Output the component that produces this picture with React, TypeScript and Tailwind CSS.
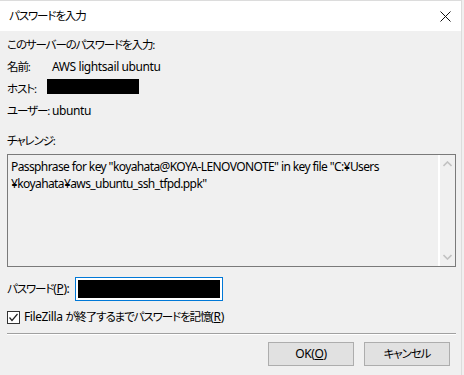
import React from "react";

const F = "[font-family:'Noto_Sans','Noto_Sans_CJK_JP',sans-serif] [font-feature-settings:'palt']";

function J({ children }: { children: React.ReactNode }) {
  return <span className="text-[11.5px] tracking-[-1.1px]">{children}</span>;
}

export default function App() {
  return (
    <div className={`w-[464px] h-[375px] bg-[#f0f0f0] overflow-hidden text-[12px] leading-[16px] tracking-[-0.4px] text-black whitespace-nowrap ${F}`}>
      <div className="w-[462px] h-[375px] border-t border-r border-[#dcdcdc] flex flex-col">
        {/* title bar */}
        <div className="h-[30px] bg-white flex items-center justify-between pl-[9px] pr-[10px] shrink-0">
          <J>パスワードを入力</J>
          <svg width="11" height="11" viewBox="0 0 11 11">
            <path d="M0.5 0.5 L10.5 10.5 M10.5 0.5 L0.5 10.5" stroke="#111" strokeWidth="1" />
          </svg>
        </div>
        <div className="flex flex-col px-[7px] pt-[3px]">
          <div className="h-[22px] flex items-center"><J>このサーバーのパスワードを入力:</J></div>
          <div className="h-[22px] flex items-center">
            <span className="w-[45px] shrink-0"><J>名前:</J></span>
            <span>AWS lightsail ubuntu</span>
          </div>
          <div className="h-[22px] flex items-center">
            <span className="w-[40px] shrink-0"><J>ホスト:</J></span>
            <span className="w-[92px] h-[15px] bg-black -mt-[5px] shrink-0"></span>
          </div>
          <div className="h-[22px] flex items-center">
            <span className="w-[45px] shrink-0"><J>ユーザー:</J></span>
            <span>ubuntu</span>
          </div>
          <div className="h-[22px] flex items-center mt-[8px]"><J>チャレンジ:</J></div>
          <div className="mt-[2px] w-[449px] h-[113px] border border-[#7a7a7a] flex">
            <div className="flex-1 pl-[3px] pt-[3px] leading-[17px] tracking-[-0.6px]">
              Passphrase for key "koyahata@KOYA-LENOVONOTE" in key file "C:¥Users
              <br />
              ¥koyahata¥aws_ubuntu_ssh_tfpd.ppk"
            </div>
            <div className="w-[17px] border-l-2 border-white flex flex-col justify-between items-center py-[6px]">
              <svg width="9" height="6" viewBox="0 0 9 6">
                <path d="M0.5 5 L4.5 1 L8.5 5" stroke="#c2c2c2" strokeWidth="1.6" fill="none" />
              </svg>
              <svg width="9" height="6" viewBox="0 0 9 6">
                <path d="M0.5 1 L4.5 5 L8.5 1" stroke="#c2c2c2" strokeWidth="1.6" fill="none" />
              </svg>
            </div>
          </div>
          <div className="mt-[10px] h-[24px] flex items-center">
            <span className="w-[68px] shrink-0">
              <J>パスワード</J>(<span className="underline">P</span>):
            </span>
            <div className="w-[148px] h-[24px] border border-[#0078d7] bg-white p-[2px] shrink-0">
              <div className="w-full h-full bg-black"></div>
            </div>
          </div>
          <div className="mt-[7px] h-[18px] flex items-center">
            <div className="w-[13px] h-[13px] border border-[#333] bg-white flex items-center justify-center shrink-0">
              <svg width="11" height="11" viewBox="0 0 11 11">
                <path d="M1.5 5.5 L4 8.5 L9.5 2" stroke="#222" strokeWidth="1.2" fill="none" />
              </svg>
            </div>
            <span className="ml-[4px]">
              FileZilla <J>が終了するまでパスワードを記憶</J>(<span className="underline">R</span>)
            </span>
          </div>
          <div className="mt-[7px] w-[449px] border-t border-[#a0a0a0] border-b border-b-white"></div>
          <div className="mt-[7px] flex justify-end gap-[10px] pr-[4px]">
            <button className="w-[86px] h-[24px] bg-[#e1e1e1] border border-[#adadad] flex items-center justify-center">
              OK(<span className="underline">O</span>)
            </button>
            <button className="w-[86px] h-[24px] bg-[#e1e1e1] border border-[#adadad] flex items-center justify-center">
              <J>キャンセル</J>
            </button>
          </div>
        </div>
      </div>
    </div>
  );
}
